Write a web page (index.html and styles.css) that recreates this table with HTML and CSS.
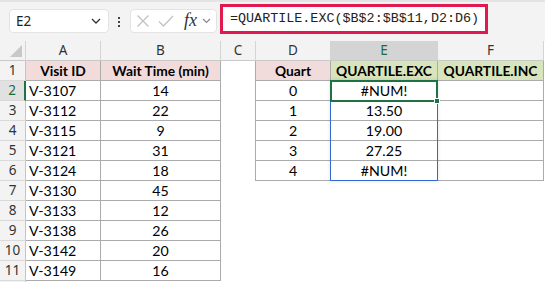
FILE: index.html
```html
<!DOCTYPE html>
<html>
<head>
<meta charset="utf-8">
<link rel="stylesheet" href="styles.css">
</head>
<body>
<div class="toolbar">
  <div class="namebox">
    <span class="name">E2</span>
    <svg class="chev" width="10" height="6" viewBox="0 0 10 6"><path d="M1 1 L5 5 L9 1" fill="none" stroke="#333" stroke-width="1.3"/></svg>
  </div>
  <div class="dots"><i></i><i></i><i></i></div>
  <div class="fxbox">
    <svg width="14" height="12" viewBox="0 0 14 12"><path d="M1.5 0.5 L12.5 11.5 M12.5 0.5 L1.5 11.5" stroke="#c2c2c2" stroke-width="1.3" fill="none"/></svg>
    <svg width="16" height="12" viewBox="0 0 16 12"><path d="M1 6.5 L5.5 11 L15 1" stroke="#c2c2c2" stroke-width="1.3" fill="none"/></svg>
    <span class="fx">fx</span>
    <svg width="9" height="6" viewBox="0 0 9 6"><path d="M1 1 L4.5 4.5 L8 1" fill="none" stroke="#888" stroke-width="1.2"/></svg>
  </div>
  <div class="formula">=QUARTILE.EXC($B$2:$B$11,D2:D6)</div>
  <div class="rest"></div>
</div>
<div class="sheet">
  <div class="c corner"><svg width="12" height="12" viewBox="0 0 12 12"><path d="M12 0 L12 12 L0 12 Z" fill="#c8c8c8"/></svg></div>
  <div class="c ch">A</div><div class="c ch">B</div><div class="c ch">C</div><div class="c ch">D</div><div class="c ch chs">E</div><div class="c ch">F</div>

  <div class="c rh">1</div><div class="c t hp">Visit ID</div><div class="c t hp">Wait Time (min)</div><div class="c cb"></div><div class="c t hp">Quart</div><div class="c t hg">QUARTILE.EXC</div><div class="c t hg">QUARTILE.INC</div>
  <div class="c rh rhs">2</div><div class="c t l">V-3107</div><div class="c t">14</div><div class="c cb"></div><div class="c t">0</div><div class="c t">#NUM!</div><div class="c t"></div>
  <div class="c rh">3</div><div class="c t l">V-3112</div><div class="c t">22</div><div class="c cb"></div><div class="c t">1</div><div class="c t">13.50</div><div class="c t"></div>
  <div class="c rh">4</div><div class="c t l">V-3115</div><div class="c t">9</div><div class="c cb"></div><div class="c t">2</div><div class="c t">19.00</div><div class="c t"></div>
  <div class="c rh">5</div><div class="c t l">V-3121</div><div class="c t">31</div><div class="c cb"></div><div class="c t">3</div><div class="c t">27.25</div><div class="c t"></div>
  <div class="c rh">6</div><div class="c t l">V-3124</div><div class="c t">18</div><div class="c cb"></div><div class="c t">4</div><div class="c t">#NUM!</div><div class="c t"></div>
  <div class="c rh">7</div><div class="c t l">V-3130</div><div class="c t">45</div><div class="c e"></div><div class="c e"></div><div class="c e"></div><div class="c e"></div>
  <div class="c rh">8</div><div class="c t l">V-3133</div><div class="c t">12</div><div class="c e"></div><div class="c e"></div><div class="c e"></div><div class="c e"></div>
  <div class="c rh">9</div><div class="c t l">V-3138</div><div class="c t">26</div><div class="c e"></div><div class="c e"></div><div class="c e"></div><div class="c e"></div>
  <div class="c rh">10</div><div class="c t l">V-3142</div><div class="c t">20</div><div class="c e"></div><div class="c e"></div><div class="c e"></div><div class="c e"></div>
  <div class="c rh">11</div><div class="c t l">V-3149</div><div class="c t">16</div><div class="c e"></div><div class="c e"></div><div class="c e"></div><div class="c e"></div>
  <div class="c rh"></div><div class="c e"></div><div class="c e"></div><div class="c e"></div><div class="c e"></div><div class="c e"></div><div class="c e"></div>

  <div class="spill"></div>
  <div class="sel"><div class="handle"></div></div>
</div>
</body>
</html>
```

FILE: styles.css
```css
* { box-sizing: border-box; }
html, body { margin: 0; padding: 0; }
body {
  width: 545px;
  height: 282px;
  overflow: hidden;
  background: #fff;
  font-family: Lato, "Liberation Sans", sans-serif;
}
.toolbar {
  height: 41px;
  background: #f3f3f3;
  border-top: 2px solid #e4e4e4;
  display: flex;
  align-items: flex-start;
  position: relative;
}
.namebox {
  margin: 7px 0 0 9px;
  width: 100px;
  height: 24px;
  background: #fff;
  border: 1px solid #e3e3e3;
  border-radius: 4px;
  display: flex;
  align-items: center;
  justify-content: space-between;
  padding: 0 7px 0 6px;
}
.name { font-family: "Noto Sans", sans-serif; font-size: 13.5px; color: #222; }
.dots {
  margin: 15px 0 0 9px;
  width: 2px;
  display: flex;
  flex-direction: column;
  gap: 2px;
}
.dots i { display: block; width: 2px; height: 2px; background: #444; }
.fxbox {
  margin: 7px 0 0 10px;
  width: 87px;
  height: 24px;
  background: #fff;
  border: 1px solid #e3e3e3;
  border-radius: 4px;
  display: flex;
  align-items: center;
  padding-left: 5px;
  gap: 8px;
}
.fxbox .fx {
  font-family: "Liberation Serif", serif;
  font-style: italic;
  font-size: 18px;
  color: #333;
  margin-left: 2px;
  margin-right: -3px;
  line-height: 1;
  position: relative;
  top: -1px;
}
.formula {
  margin: 2px 0 0 3px;
  width: 268px;
  height: 30px;
  background: #fff;
  border: 3px solid #e0194e;
  font-family: "Liberation Mono", monospace;
  font-size: 13.4px;
  color: #222;
  padding-left: 7px;
  line-height: 24px;
  white-space: nowrap;
}
.rest { flex: 1; }
.sheet {
  display: grid;
  grid-template-columns: 26px 75px 120px 35px 75px 107px 106px;
  grid-auto-rows: 20px;
  position: relative;
}
.c {
  font-size: 14.2px;
  line-height: 19px;
  text-align: center;
  color: #000;
  white-space: nowrap;
}
.corner {
  background: #f3f3f3;
  border-right: 1px solid #d4d4d4;
  border-bottom: 1px solid #c9c9c9;
  display: flex;
  align-items: flex-end;
  justify-content: flex-end;
  padding: 0 3px 3px 0;
}
.ch {
  background: #f3f3f3;
  border-right: 1px solid #d4d4d4;
  border-bottom: 1px solid #c9c9c9;
  font-family: "Noto Sans", sans-serif;
  font-size: 13.5px;
  color: #333;
}
.chs { background: #d4d4d4; color: #1c6b3e; }
.rh {
  background: #f3f3f3;
  border-right: 1px solid #c4c4c4;
  border-bottom: 1px solid #dadada;
  font-family: "Noto Sans", sans-serif;
  font-size: 13.5px;
  color: #333;
}
.rhs { background: #e1e1e1; color: #1c6b3e; border-right: 2px solid #1f7244; }
.t {
  border-right: 1px solid #ababab;
  border-bottom: 1px solid #ababab;
}
.l { text-align: left; padding-left: 3px; }
.cb { border-right: 1px solid #ababab; }
.e { background: #fff; }
.hp { background: #f2dcdb; font-weight: 700; font-size: 13.8px; }
.hg { background: #d8e4bc; font-weight: 700; font-size: 13.8px; }
.spill {
  position: absolute;
  left: 330px;
  top: 39px;
  width: 108px;
  height: 101px;
  border: 1px solid #2f6bd0;
  box-shadow: 0 0 4px rgba(0,0,0,0.12);
}
.sel {
  position: absolute;
  left: 330px;
  top: 39px;
  width: 108px;
  height: 22px;
  border: 2px solid #1f7244;
}
.handle {
  position: absolute;
  right: -4px;
  bottom: -4px;
  width: 6px;
  height: 6px;
  background: #1f7244;
  border: 1px solid #fff;
}
```
